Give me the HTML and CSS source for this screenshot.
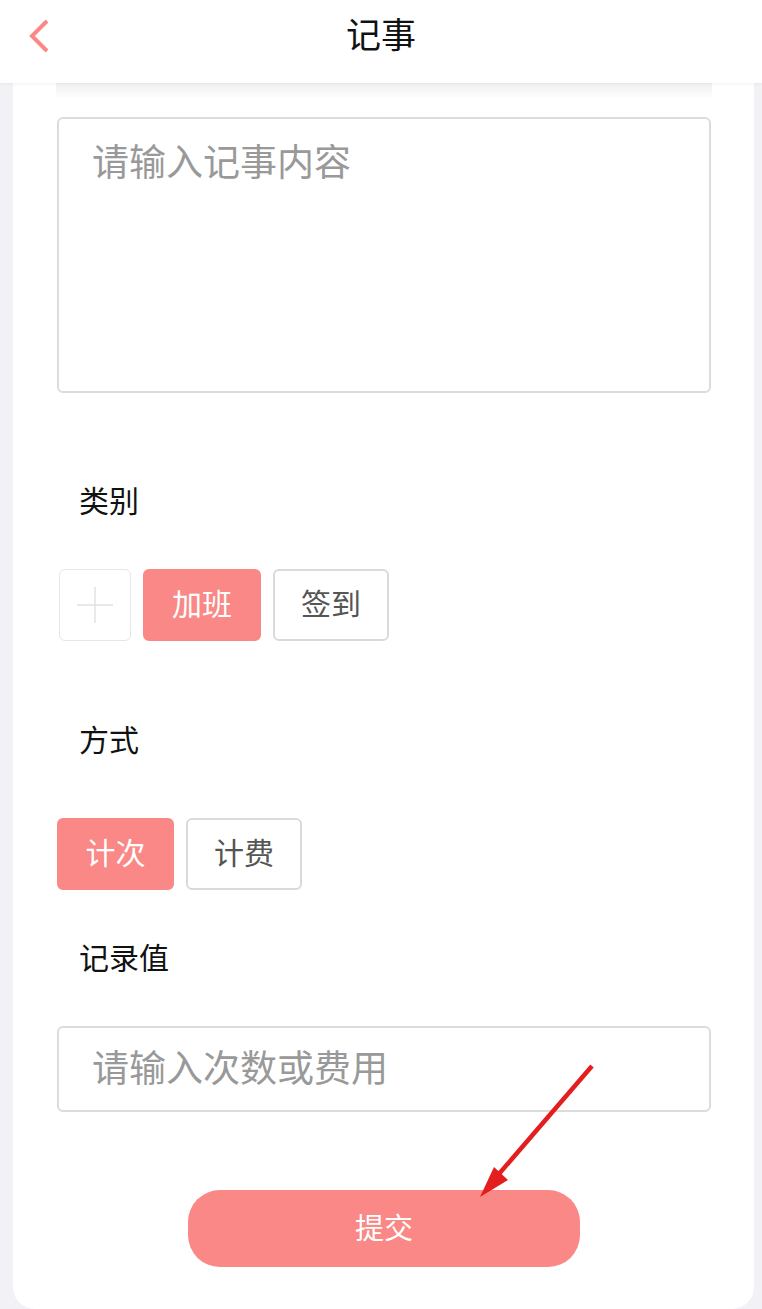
FILE: index.html
```html
<!DOCTYPE html>
<html lang="zh">
<head>
<meta charset="utf-8">
<link rel="stylesheet" href="styles.css">
</head>
<body>
<div class="page">
  <header class="topbar">
    <svg class="back" width="22" height="34" viewBox="0 0 22 34"><polyline points="19,2 4,17 19,32" fill="none" stroke="#f98886" stroke-width="4"/></svg>
    <div class="title">记事</div>
  </header>
  <main class="card">
    <div class="shade"></div>
    <div class="textarea">请输入记事内容</div>
    <div class="label first">类别</div>
    <div class="row">
      <div class="addbox">
        <svg width="36" height="36" viewBox="0 0 36 36"><path d="M18 0V36M0 18H36" stroke="#e2e2e2" stroke-width="1.5"/></svg>
      </div>
      <div class="chip on w118">加班</div>
      <div class="chip w116">签到</div>
    </div>
    <div class="label second">方式</div>
    <div class="row">
      <div class="chip on w117">计次</div>
      <div class="chip w116">计费</div>
    </div>
    <div class="label third">记录值</div>
    <div class="input">请输入次数或费用</div>
    <div class="submitwrap"><div class="submit">提交</div></div>
  </main>
  <svg class="arrow" width="140" height="150" viewBox="0 0 140 150">
    <line x1="132" y1="6" x2="32" y2="122" stroke="#e41e1e" stroke-width="4.5"/>
    <polygon points="20,137 34,107 48,120" fill="#e41e1e"/>
  </svg>
</div>
</body>
</html>
```
FILE: styles.css
```css
html, body { margin: 0; padding: 0; }
body {
  background: #f2f1f6;
  font-family: "Noto Sans CJK SC", "Noto Sans", sans-serif;
  width: 762px;
  height: 1309px;
  overflow: hidden;
}
.page { position: relative; width: 762px; height: 1309px; }
.topbar {
  position: relative;
  z-index: 2;
  height: 83px;
  background: #fff;
  box-shadow: 0 1px 3px rgba(0,0,0,0.05);
  display: flex;
  align-items: center;
  justify-content: center;
}
.back { position: absolute; left: 28px; top: 19px; }
.title { font-size: 35px; color: #111; line-height: 40px; margin-top: -18px; }
.card {
  background: #fff;
  margin: 0 8px 0 13px;
  height: 1226px;
  border-radius: 0 0 22px 22px;
  padding: 0 43px 0 44px;
  box-sizing: border-box;
  display: flex;
  flex-direction: column;
}
.shade {
  height: 14px;
  background: linear-gradient(#f1eeee, #fdfdfd);
  margin: 0 -1px 20px -1px;
}
.textarea {
  height: 276px;
  border: 2px solid #dcdcdc;
  border-radius: 6px;
  box-sizing: border-box;
  padding: 19px 0 0 33px;
  font-size: 37px;
  line-height: 44px;
  color: #999;
}
.label { font-size: 30px; line-height: 40px; color: #111; padding-left: 22px; }
.label.first { margin-top: 86px; margin-bottom: 50px; }
.label.second { margin-top: 77px; margin-bottom: 60px; }
.label.third { margin-top: 46px; margin-bottom: 50px; }
.row { display: flex; gap: 12px; height: 72px; }
.addbox {
  width: 72px; height: 72px;
  margin-left: 2px;
  box-sizing: border-box;
  border: 1.5px solid #e6e6e6;
  border-radius: 6px;
  display: flex; align-items: center; justify-content: center;
}
.chip {
  height: 72px;
  box-sizing: border-box;
  border: 2px solid #dadada;
  border-radius: 6px;
  padding-bottom: 6px;
  display: flex; align-items: center; justify-content: center;
  font-size: 30px;
  color: #555;
}
.chip.on { background: #f98886; border-color: #f98886; color: #fff; }
.w118 { width: 118px; }
.w117 { width: 117px; }
.w116 { width: 116px; }
.input {
  height: 86px;
  border: 2px solid #dcdcdc;
  border-radius: 6px;
  box-sizing: border-box;
  padding: 0 0 6px 33px;
  display: flex; align-items: center;
  font-size: 37px;
  color: #999;
}
.submitwrap { display: flex; justify-content: center; margin-top: 78px; }
.submit {
  width: 392px; height: 77px;
  background: #f98886;
  border-radius: 32px;
  color: #fff;
  font-size: 29px;
  padding-bottom: 6px;
  box-sizing: border-box;
  display: flex; align-items: center; justify-content: center;
}
.arrow { position: absolute; left: 460px; top: 1060px; }
```
